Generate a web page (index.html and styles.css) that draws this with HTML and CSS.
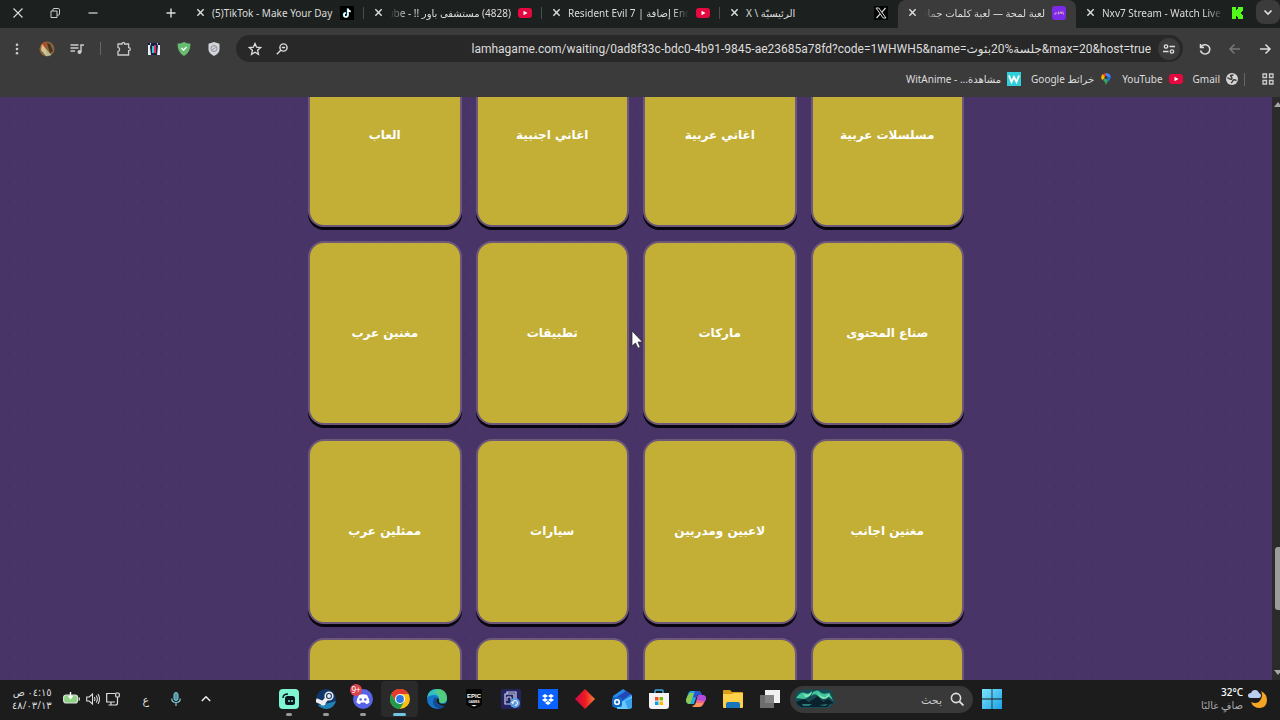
FILE: index.html
```html
<!DOCTYPE html>
<html lang="ar" dir="rtl">

<head>
  <meta charset="UTF-8" />
  <meta name="viewport" content="width=device-width, initial-scale=1.0" />
  <title>لعبة لمحة</title>
  <link rel="stylesheet" href="styles.css">
</head>

<body>
  <svg class="sprites" aria-hidden="true">
    <symbol id="close" viewBox="0 0 10 10"><path d="M1.500 1.500l7 7m0-7l-7 7" fill="none" stroke="currentColor" stroke-width="1.600" /></symbol>
    <symbol id="youtube" viewBox="0 0 14 14"><rect y="2" width="14" height="10" rx="3" fill="#e5093f" /><path d="M5.500 4.800l4 2.200-4 2.200z" fill="#fff" /></symbol>
  </svg>

  <header>
    <div class="tab-strip">
      <button class="tab-search" aria-label="Search tabs"><svg class="icon-sm" viewBox="0 0 10 10"><path d="M1.500 3.500L5 7l3.500-3.500" fill="none" stroke="#ddd" stroke-width="1.700" /></svg></button>

      <div class="tab">
        <svg class="favicon" viewBox="0 0 14 14"><path d="M2 1h4v3h1V3h1V1h5v4h-1v1h-1v2h1v1h1v4H8v-2H7v-1H6v3H2z" fill="#53fc18" /></svg>
        <span class="tab-title fade-right" dir="ltr">Nxv7 Stream - Watch Live o</span>
        <button class="tab-close" aria-label="Close tab"><svg class="icon-sm"><use href="#close" /></svg></button>
      </div>
      <div class="tab active">
        <svg class="favicon" viewBox="0 0 14 14"><rect width="14" height="14" rx="3" fill="#7b2be8" /><path d="M2 8h2V6m1.500 2h1V5.500M8 8V6h1.500v2M11 5.500V8h1" fill="none" stroke="#d6a0b8" stroke-width="1" /></svg>
        <span class="tab-title fade-left">لعبة لمحة — لعبة كلمات جماعية</span>
        <button class="tab-close" aria-label="Close tab"><svg class="icon-sm"><use href="#close" /></svg></button>
      </div>
      <div class="tab">
        <svg class="favicon" viewBox="0 0 14 14"><rect width="14" height="14" fill="#050505" /><path d="M2 2h2.800L12 12H9.200z" fill="none" stroke="#ddd" /><path d="M11.500 2L7.700 6.300M6.200 7.900L2.500 12" stroke="#ddd" stroke-width="1.200" /></svg>
        <span class="tab-title title-end">الرئيسيّة \ X</span>
        <button class="tab-close" aria-label="Close tab"><svg class="icon-sm"><use href="#close" /></svg></button>
      </div>
      <div class="tab divided">
        <svg class="favicon"><use href="#youtube" /></svg>
        <span class="tab-title fade-right" dir="ltr">Resident Evil 7 | إضافة End</span>
        <button class="tab-close" aria-label="Close tab"><svg class="icon-sm"><use href="#close" /></svg></button>
      </div>
      <div class="tab divided">
        <svg class="favicon"><use href="#youtube" /></svg>
        <span class="tab-title fade-left">(4828) مستشفى باور !! - YouTube</span>
        <button class="tab-close" aria-label="Close tab"><svg class="icon-sm"><use href="#close" /></svg></button>
      </div>
      <div class="tab divided">
        <svg class="favicon" viewBox="0 0 14 14"><rect width="14" height="14" fill="#000" /><path d="M7.500 2.500v6.200a2 2 0 1 1-2-2" fill="none" stroke="#2ce" stroke-width="1.500" /><path d="M8 2.500v6.500a2 2 0 1 1-2-2M8 3q.5 2.300 2.800 2.400" fill="none" stroke="#fff" stroke-width="1.600" /></svg>
        <span class="tab-title" dir="ltr">(5)TikTok - Make Your Day</span>
        <button class="tab-close" aria-label="Close tab"><svg class="icon-sm"><use href="#close" /></svg></button>
      </div>
      <button class="new-tab" aria-label="New tab"><svg class="icon-sm" viewBox="0 0 10 10"><path d="M5 .5v9M.5 5h9" stroke="#ddd" stroke-width="1.400" /></svg></button>

      <div class="window-controls">
        <button aria-label="Minimize"><svg class="icon-sm" viewBox="0 0 10 10"><path d="M.5 5h9" stroke="#ddd" stroke-width="1.200" /></svg></button>
        <button aria-label="Restore"><svg class="icon-sm" viewBox="0 0 10 10"><path d="M1 3h6v6.500H1zM3 3V1.200q0-.7.7-.7h4.600q1.200 0 1.200 1.200v4.600q0 .7-.7.7H7" fill="none" stroke="#ccc" /></svg></button>
        <button aria-label="Close"><svg class="icon-sm" viewBox="0 0 10 10"><path d="M.5.5l9 9m0-9l-9 9" stroke="#ddd" stroke-width="1.100" /></svg></button>
      </div>
    </div>

    <div class="toolbar">
      <button aria-label="Forward"><svg class="icon" viewBox="0 0 14 14"><path d="M2 7h10M7.500 2.500L12 7l-4.500 4.500" fill="none" stroke="#ddd" stroke-width="1.500" /></svg></button>
      <button aria-label="Back"><svg class="icon" viewBox="0 0 14 14"><path d="M12 7H2M6.500 2.500L2 7l4.500 4.500" fill="none" stroke="#777" stroke-width="1.500" /></svg></button>
      <button aria-label="Reload"><svg class="icon" viewBox="0 0 14 14"><path d="M2.500 2v3.500H6M3 5a4.700 4.700 0 1 1-.5 3.500" fill="none" stroke="#ddd" stroke-width="1.500" /></svg></button>
      <div class="omnibox">
        <button class="site-info" aria-label="Site information"><svg class="icon-md" viewBox="0 0 12 12"><path d="M6.500 3.500H12M0 8.500h5.500" stroke="#ddd" stroke-width="1.300" /><circle cx="3" cy="3.500" r="1.700" fill="none" stroke="#ddd" stroke-width="1.300" /><circle cx="9" cy="8.500" r="1.700" fill="none" stroke="#ddd" stroke-width="1.300" /></svg></button>
        <input class="url" type="text" dir="ltr" aria-label="Address bar" value="lamhagame.com/waiting/0ad8f33c-bdc0-4b91-9845-ae23685a78fd?code=1WHWH5&amp;name=جلسة%20بثوث&amp;max=20&amp;host=true">
        <button aria-label="Zoom"><svg class="icon-md" viewBox="0 0 12 12"><circle cx="7.500" cy="4.500" r="3.600" fill="none" stroke="#ddd" stroke-width="1.400" /><path d="M5 7L.8 11.200M5.800 4.500h3.400" stroke="#ddd" stroke-width="1.400" /></svg></button>
        <button aria-label="Bookmark this page"><svg class="icon" viewBox="0 0 14 14"><path d="M7 1.500l1.600 3.700 4 .4-3 2.700.9 4L7 10.200l-3.500 2.100.9-4-3-2.700 4-.4z" fill="none" stroke="#ddd" stroke-width="1.300" /></svg></button>
      </div>
      <div class="extensions">
        <button aria-label="Privacy shield"><svg class="icon" viewBox="0 0 14 14"><path d="M7 0l5.500 1.800v5.400q0 4-5.500 6.800-5.500-2.800-5.500-6.800V1.800z" fill="#d3d5da" /><circle cx="7" cy="6.500" r="3" fill="none" stroke="#8b8f98" /><path d="M5.500 7.500l3-2" stroke="#8b8f98" /></svg></button>
        <button aria-label="Ad blocker"><svg class="icon" viewBox="0 0 14 14"><path d="M7 0q3 1.700 6.500 1.700 0 8.800-6.500 12.300Q.5 10.500.5 1.700 4 1.700 7 0z" fill="#68bc71" /><path d="M4.500 6l2 2.200 3-3.200" fill="none" stroke="#fff" stroke-width="1.300" /></svg></button>
        <button aria-label="Video extension"><svg class="icon" viewBox="0 0 14 14"><path d="M1 1h12v12H1z" fill="#e8ecf2" /><path d="M4 1h6l1 3-1 9H4L3 5z" fill="#152442" /><path d="M5 4h2v7H5z" fill="#35cbd2" /><path d="M7 3h2v8H7z" fill="#e52b57" /><path d="M1 1h2v2H1zM11 1h2v2h-2z" fill="#171a3b" /></svg></button>
        <button aria-label="Extensions"><svg class="icon" viewBox="0 0 14 14"><path d="M1 2h4q0-1.500 1.300-1.500T7.600 2h4v3.700q1.700 0 1.700 1.500t-1.700 1.500v4.300H1V9.300q1.600-.2 1.600-1.900T1 5.400z" fill="none" stroke="#ccc" stroke-width="1.300" /></svg></button>
        <span class="divider"></span>
        <button aria-label="Media controls"><svg class="icon" viewBox="0 0 14 14"><path d="M.5 3h8M.5 6h8M.5 9H5M11 10V3h3" fill="none" stroke="#ccc" stroke-width="1.400" /><circle cx="9.500" cy="10" r="2" fill="#ccc" /></svg></button>
        <button aria-label="Profile"><svg class="icon-lg" viewBox="0 0 16 16"><circle cx="8" cy="8" r="7.500" fill="#87633f" /><path d="M2 4q4-4 6-3L7 7 2 10z" fill="#b34c2b" /><path d="M3 3l9 11-5 1L2 9z" fill="#d8c28b" /><path d="M8 2l3 1 3 7-3 2z" fill="#46351d" /><path d="M7 9l5 5-4 1z" fill="#a5bd9c" /></svg></button>
        <button aria-label="Menu"><svg class="icon" viewBox="0 0 14 14"><circle cx="7" cy="2.800" r="1.300" fill="#ccc" /><circle cx="7" cy="7" r="1.300" fill="#ccc" /><circle cx="7" cy="11.200" r="1.300" fill="#ccc" /></svg></button>
      </div>
    </div>

    <nav class="bookmarks">
      <button aria-label="Apps"><svg class="icon-md" viewBox="0 0 12 12"><path d="M1 1h3.500v3.500H1zM7.500 1H11v3.500H7.500zM1 7.500h3.500V11H1zM7.500 7.500H11V11H7.500z" fill="none" stroke="#ccc" stroke-width="1.300" /></svg></button>
      <span class="divider"></span>
      <a href="#"><svg class="icon-md" viewBox="0 0 12 12"><circle cx="6" cy="6" r="6" fill="#d5d5d5" /><path d="M1.500 4.500q3 2.500 4 1.500T5 3.500 7.500 2M10.500 7.500q-3-1.500-3.500 0T5 10" fill="none" stroke="#3b3b3b" stroke-width="1.500" /></svg>Gmail</a>
      <a href="#"><svg class="favicon"><use href="#youtube" /></svg>YouTube</a>
      <a href="#"><svg class="icon-md" viewBox="0 0 12 12"><path d="M6 12Q5.500 9 3 7L6 4.500 9 7Q6.500 9 6 12z" fill="#34a853" /><path d="M2 7Q0 3 3 1l3 3.500z" fill="#fbbc04" /><path d="M2.500 1.500Q4 0 6.500 0L6 4.500z" fill="#ea4335" /><path d="M6 0q4 0 4.800 4L6 4.500z" fill="#4285f4" /><path d="M10.800 4Q11 6 8 9L6 4.500z" fill="#1a73e8" /><circle cx="6" cy="4.400" r="1.600" fill="#3b3b3b" /></svg>خرائط Google</a>
      <a href="#"><svg class="favicon" viewBox="0 0 14 14"><rect width="14" height="14" fill="#2fd0dc" /><path d="M2 3.500L4.500 10 7 5l2.500 5L12 3.500" fill="none" stroke="#fff" stroke-width="1.900" /></svg>مشاهدة... - WitAnime</a>
    </nav>
  </header>

  <div class="viewport">
    <div class="scrollbar">
      <svg class="arrow" viewBox="0 0 6 6"><path d="M0 6l4-5 2 2.500V6z" fill="#a5a5a5" /></svg>
      <span class="thumb"></span>
      <svg class="arrow" viewBox="0 0 6 6"><path d="M0 0l4 5 2-2.500V0z" fill="#a5a5a5" /></svg>
    </div>
    <main>
      <div class="categories">
        <button class="category">مسلسلات عربية</button>
        <button class="category">اغاني عربية</button>
        <button class="category">اغاني اجنبية</button>
        <button class="category">العاب</button>
        <button class="category">صناع المحتوى</button>
        <button class="category">ماركات</button>
        <button class="category">تطبيقات</button>
        <button class="category">مغنين عرب</button>
        <button class="category">مغنين اجانب</button>
        <button class="category">لاعبين ومدربين</button>
        <button class="category">سيارات</button>
        <button class="category">ممثلين عرب</button>
        <button class="category" aria-label="13"></button>
        <button class="category" aria-label="14"></button>
        <button class="category" aria-label="15"></button>
        <button class="category" aria-label="16"></button>
      </div>
    </main>
  </div>

  <footer>
    <div class="weather">
      <svg class="icon-xl" viewBox="0 0 20 20"><path d="M13 2q6 3 6 9 0 7-7 8-7 0-9-6 7 3 10-3 2-4 0-8z" fill="#f5a524" /><path d="M3 9Q0 9 0 6.500T3 4q1-3 4-3t4 3q2 .5 2 2.500T11 9z" fill="#b9cdf5" /></svg>
      <div class="weather-text">
        <strong dir="ltr">32°C</strong>
        <span>صافٍ غالبًا</span>
      </div>
    </div>

    <div class="apps">
      <button aria-label="Start"><svg class="icon-xl" viewBox="0 0 20 20"><defs><linearGradient id="win" x2="1" y2="1"><stop stop-color="#7be4fb" /><stop offset="1" stop-color="#1c9fe8" /></linearGradient></defs><path d="M0 0h9.600v9.600H0zM10.400 0H20v9.600h-9.600zM0 10.400h9.600V20H0zM10.400 10.400H20V20h-9.600z" fill="url(#win)" /></svg></button>
      <label class="search">
        <svg class="icon" viewBox="0 0 14 14"><circle cx="6" cy="6" r="4.600" fill="none" stroke="#ddd" stroke-width="1.600" /><path d="M9.500 9.500L13.500 13.500" stroke="#ddd" stroke-width="1.800" /></svg>
        <input type="text" placeholder="بحث" aria-label="بحث">
        <svg class="aurora" viewBox="0 0 42 20"><path d="M2 3q8-4 19-2 10-2 17 1l2 9 2 3-4 2-3 3H7q-5-2-6-9z" fill="#164c55" /><path d="M2 9q5-7 9-5t7-1q-3 6-8 7zM19 3q5-3 7 0t9 1q3 4 4 8-4-6-9-4t-7-2q-3-2-6 1z" fill="#3fc49c" /><path d="M9 4q4 4 9-2-1 7-7 6zM24 3q2 5 7 5l5-4q-1 6-7 6-4-1-5-7z" fill="#7ce6b2" /><path d="M2 13l8-3 5 3 9-6 5 6 5-3 6 4-4 1-3 3H7q-3-1-5-5z" fill="#0b222c" /><path d="M8 15h10l-3 2H9zM25 16l9-1-3 2z" fill="#267f7e" /></svg>
      </label>
      <button aria-label="Task view"><svg class="icon-xl" viewBox="0 0 20 20"><path d="M5 1h15v13H5z" fill="#f0f0f0" /><path d="M0 6h14v13H0z" fill="#777" opacity=".9" /></svg></button>
      <button aria-label="File Explorer"><svg class="icon-xl" viewBox="0 0 20 20"><path d="M0 2q0-1 1-1h6l2 2h10q1 0 1 1v5H0z" fill="#d99b18" /><path d="M0 5h9l2-1h9v14q0 1-1 1H1q-1 0-1-1z" fill="#ffd04a" /><path d="M3 19v-4q0-2 2-2h10q2 0 2 2v4z" fill="#1976ba" /></svg></button>
      <button aria-label="Copilot"><svg class="icon-xl" viewBox="0 0 20 20"><path d="M5 2h7q3 0 3 3l-4 1-3 9H4q-4 0-4-4l2-6q1-3 3-3z" fill="#25a8e0" /><path d="M1 8l3-4h4L5 13l-1 2q-4 0-4-4z" fill="#8bcb4e" /><path d="M9 2h3q3 0 4 4h-5l-1 3-3-1z" fill="#2856d0" /><path d="M6 17q3 0 4-4l2-7h4q4 0 4 4l-3 6q-1 2-4 2H9q-2 0-3-1z" fill="#f0648c" /><path d="M12 6h4q4 0 4 4l-1 2-8-1z" fill="#b34ae0" /><path d="M6 17q3 0 4-3h7l-1 2q-1 2-4 2H9q-2 0-3-1z" fill="#f79a56" /></svg></button>
      <button aria-label="Store"><svg class="icon-xl" viewBox="0 0 20 20"><path d="M6 5V2q0-1 1-1h6q1 0 1 1v3" fill="none" stroke="#3aa8dc" stroke-width="1.500" /><path d="M0 4h20v13q0 3-3 3H3q-3 0-3-3z" fill="#f4f4f4" /><path d="M6 8h3.500v3.500H6z" fill="#f25022" /><path d="M10.500 8H14v3.500h-3.500z" fill="#7fba00" /><path d="M6 12.500h3.500V16H6z" fill="#00a4ef" /><path d="M10.500 12.500H14V16h-3.500z" fill="#ffb900" /></svg></button>
      <button aria-label="Outlook"><svg class="icon-xl" viewBox="0 0 20 20"><path d="M1 7L11 0l9 6v10q0 3-3 3H5q-4 0-4-4z" fill="#258bea" /><path d="M3 9l11-7 5 3-12 9z" fill="#2447b8" /><path d="M6 15L20 7v10q0 3-3 3H5z" fill="#66cafa" /><path d="M13 12l7-3v8q-1 3-4 3z" fill="#399fee" /><rect y="8" width="10" height="10" rx="2" fill="#1268c4" /><circle cx="5" cy="13" r="2.300" fill="none" stroke="#fff" stroke-width="1.600" /></svg></button>
      <button aria-label="Anydesk"><svg class="icon-xl" viewBox="0 0 20 20"><defs><linearGradient id="red"><stop stop-color="#c60b4e" /><stop offset=".5" stop-color="#f01822" /><stop offset="1" stop-color="#ef8535" /></linearGradient></defs><path d="M10 0l10 10-10 10L0 10z" fill="url(#red)" /></svg></button>
      <button aria-label="Dropbox"><svg class="icon-xl" viewBox="0 0 20 20"><path d="M0 0h20v20H0z" fill="#0b61fe" /><path d="M7 5l3 2-3 2-3-2zM13 5l3 2-3 2-3-2zM7 9l3 2-3 2-3-2zM13 9l3 2-3 2-3-2zM10 12l3 2-3 2-3-2z" fill="#fff" /></svg></button>
      <button aria-label="Backup"><svg class="icon-xl" viewBox="0 0 20 20"><rect width="20" height="20" rx="2" fill="#25235f" /><path d="M4 5h9v10H4zM6 5V3h9v8" fill="none" stroke="#ccd4f0" stroke-width="1.200" /><path d="M6 12V8h4v3" fill="none" stroke="#ccd4f0" /><circle cx="14" cy="14" r="5" fill="#5c9be0" /><path d="M11.500 14a2.500 2.500 0 1 1 2.500 2.500M10.500 13l1 1.500 1.500-1" fill="none" stroke="#fff" /></svg></button>
      <button aria-label="Epic Games"><svg class="icon-xl" viewBox="0 0 20 20"><path d="M3 0h14q1 0 1 1v15l-8 4-8-4V1q0-1 1-1z" fill="#060606" /><text x="10" y="9" class="epic-name">EPIC</text><text x="10" y="14" class="epic-sub">GAMES</text><path d="M7 16h6l-3 1.500z" fill="#eee" /></svg></button>
      <button aria-label="Edge"><svg class="icon-xl" viewBox="0 0 20 20"><circle cx="10" cy="10" r="10" fill="#1576c8" /><path d="M0 9Q1 0 10 0t10 9q0 5-5 5-4 0-3-3Q12 6 7 6 2 6 0 9z" fill="#31bfc5" /><path d="M10 0q10 0 10 9 0 5-5 5-4 0-3-3 1-6-5-8z" fill="#5bd16b" opacity=".75" /><path d="M7 9q-3 8 5 11 5-1 7-5-8 3-10-2-1-2 1-4z" fill="#124a96" /><path d="M11 9q2 2 1 4 1 2 4 2l4-1v2l-2 1q-5 0-8-3-2-3 1-5z" fill="#1c1c1c" /></svg></button>
      <button class="open current" aria-label="Chrome"><svg class="icon-xl" viewBox="0 0 20 20"><circle cx="10" cy="10" r="10" fill="#fbc116" /><path d="M1.300 5A10 10 0 0 1 18.700 5H10q-4 0-4.400 7.500z" fill="#e33b2e" /><path d="M1.300 5A10 10 0 0 0 10 20l4.300-7.500H5.700z" fill="#229a4b" /><circle cx="10" cy="10" r="5" fill="#fff" /><circle cx="10" cy="10" r="3.900" fill="#2b78e4" /></svg></button>
      <button class="open" aria-label="Discord"><svg class="icon-xl" viewBox="0 0 20 20"><circle cx="10" cy="10" r="10" fill="#5763e8" /><path d="M6 6q4-1.500 8 0 2.500 4 2.500 7.500-2 1.500-3.500 1.500l-1-1.500H8L7 15q-1.500 0-3.500-1.500Q3.500 10 6 6z" fill="#fff" /><circle cx="7.700" cy="10.500" r="1.300" fill="#5763e8" /><circle cx="12.300" cy="10.500" r="1.300" fill="#5763e8" /></svg><span class="badge" dir="ltr">9+</span></button>
      <button class="open" aria-label="Steam"><svg class="icon-xl" viewBox="0 0 20 20"><circle cx="10" cy="10" r="10" fill="#12366a" /><path d="M2 16q3 4 9 4 7-1 9-8l-7 2z" fill="#2182b5" /><path d="M0 11l7 3 5-6" fill="none" stroke="#eee" stroke-width="4" /><circle cx="13" cy="7" r="3.800" fill="#12366a" stroke="#eee" stroke-width="1.600" /><circle cx="13" cy="7" r="1.900" fill="#eee" /><circle cx="7" cy="14" r="2.500" fill="#eee" /></svg></button>
      <button class="open" aria-label="Streamlabs"><svg class="icon-xl" viewBox="0 0 20 20"><rect width="20" height="20" rx="4" fill="#80f5d2" /><path d="M4 9q0-4 5-4" fill="none" stroke="#09161d" stroke-width="1.500" /><rect x="6" y="7" width="10" height="9" rx="2.500" fill="#09161d" /><path d="M10 11v2M13 11v2" stroke="#80f5d2" stroke-width="1.400" /></svg></button>
    </div>

    <div class="tray">
      <button aria-label="Hidden icons"><svg class="icon-sm" viewBox="0 0 10 10"><path d="M.8 7L5 2.800 9.200 7" fill="none" stroke="#eee" stroke-width="1.500" /></svg></button>
      <button aria-label="Microphone"><svg class="icon" viewBox="0 0 14 14"><rect x="5" y="0.500" width="4" height="8" rx="2" fill="#4f94a5" stroke="#80cbdc" /><path d="M2.800 6.500q0 4 4.200 4t4.200-4M7 10.500V14" fill="none" stroke="#80cbdc" stroke-width="1.200" /></svg></button>
      <button class="language">ع</button>
      <div class="status">
        <svg class="icon" viewBox="0 0 14 14"><path d="M9 1.500H.7V10H9M5 10v2.500M2.500 13h8M11.500 5v6q0 2-2 2" fill="none" stroke="#ddd" stroke-width="1.200" /><rect x="9.700" y="1" width="3.600" height="4" rx="1" fill="none" stroke="#ddd" stroke-width="1.200" /></svg>
        <svg class="icon" viewBox="0 0 14 14"><path d="M.7 5h2.500L6.500 2v10L3.200 9H.7z" fill="none" stroke="#ddd" stroke-width="1.100" /><path d="M8.300 5q1.300 2 0 4M10.200 3.500q2.300 3.500 0 7M12 2q3 5 0 10" fill="none" stroke="#ddd" stroke-width="1.100" /></svg>
        <svg class="battery" viewBox="0 0 17 14"><rect x=".6" y="3" width="14" height="8" rx="2.500" fill="#8fd484" stroke="#ddd" stroke-width="1.200" /><path d="M16.300 5.500v3" stroke="#ddd" stroke-width="1.300" /><path d="M7.500 0v5.500M5.500 4l2 2.500 2-2.500" fill="none" stroke="#fff" stroke-width="1.400" /></svg>
      </div>
      <div class="clock">
        <span>٠٤:١٥ ص</span>
        <span dir="ltr">٤٨/٠٣/١٣</span>
      </div>
    </div>
  </footer>

  <svg class="cursor" viewBox="0 0 12 19"><path d="M1 1v15l3.500-3 2.500 5.200 2.200-1L7 12h4.500z" fill="#fff" stroke="#222" stroke-width=".7" /></svg>
</body>

</html>
```
FILE: styles.css
```css
* {
  box-sizing: border-box;
}

body {
  margin: 0;
  height: 100vh;
  display: flex;
  flex-direction: column;
  overflow: hidden;
  background-color: #483466;
  color: #ddd;
  font-family: "Noto Sans", "Open Sans", "DejaVu Sans", sans-serif;
  font-size: 11px;
}

button {
  border: none;
  padding: 0;
  background-color: transparent;
  color: inherit;
  font: inherit;
  cursor: pointer;
  display: flex;
  align-items: center;
  justify-content: center;
  flex-shrink: 0;
}

input {
  border: none;
  outline: none;
  padding: 0;
  min-width: 0;
  background-color: transparent;
  color: inherit;
  font: inherit;
}

svg {
  display: block;
  flex-shrink: 0;
}

.sprites {
  display: none;
}

.icon-sm {
  width: 10px;
  height: 10px;
}

.icon-md {
  width: 12px;
  height: 12px;
}

.icon,
.favicon {
  width: 14px;
  height: 14px;
}

.icon-lg {
  width: 16px;
  height: 16px;
}

.icon-xl {
  width: 20px;
  height: 20px;
}

.divider {
  width: 1px;
  height: 13px;
  background-color: #666;
}

/* tabs */
.tab-strip {
  display: flex;
  height: 28px;
  background-color: #1c201f;
}

.tab-search {
  width: 24px;
  height: 24px;
  margin-left: 2px;
  border-radius: 8px;
  background-color: #3b3b3b;
}

.tab {
  flex: 0 1 178px;
  min-width: 0;
  display: flex;
  align-items: center;
  gap: 7px;
  padding: 0 10px 3px;
}

.tab.active {
  background-color: #3b3b3b;
  border-radius: 8px 8px 0 0;
}

.tab.divided {
  background: linear-gradient(#4a4d4c, #4a4d4c) right 7px / 1px 12px no-repeat;
}

.tab-close svg {
  width: 9px;
  height: 9px;
}

.tab-title {
  flex: 1;
  min-width: 0;
  overflow: hidden;
  white-space: nowrap;
  line-height: 20px;
  font-size: 10px;
}

.title-end {
  text-align: left;
}

.fade-left {
  mask-image: linear-gradient(to right, transparent, #000 16px);
}

.fade-right {
  mask-image: linear-gradient(to left, transparent, #000 16px);
}

.new-tab {
  width: 30px;
  height: 25px;
}

.window-controls {
  display: flex;
  height: 25px;
  margin-right: auto;
}

.window-controls button {
  width: 38px;
}

.window-controls button:last-child {
  width: 36px;
}

/* address row */
.toolbar {
  display: flex;
  align-items: center;
  height: 41px;
  background-color: #3b3b3b;
}

.toolbar > button {
  width: 30px;
  height: 28px;
}

.omnibox {
  flex: 1;
  min-width: 0;
  height: 27px;
  display: flex;
  align-items: center;
  gap: 14px;
  margin-right: 7px;
  padding: 0 3px 0 12px;
  border-radius: 14px;
  background-color: #282828;
}

.site-info {
  width: 22px;
  height: 22px;
  border-radius: 50%;
  background-color: #3b3b3b;
}

.url {
  flex: 1;
  margin-right: -7px;
  text-align: right;
  font-family: Roboto, "Noto Sans", "DejaVu Sans", sans-serif;
  font-size: 12px;
}

.extensions {
  display: flex;
  align-items: center;
  gap: 6px;
  padding: 0 10px 0 5px;
}

.extensions button {
  width: 24px;
  height: 24px;
}

.extensions .divider {
  margin: 0 5px;
}

/* bookmarks */
.bookmarks {
  display: flex;
  align-items: center;
  gap: 10px;
  height: 28px;
  padding: 0 6px 8px;
  background-color: #3b3b3b;
  font-size: 10px;
}

.bookmarks .divider {
  margin: 0 7px 0 -4px;
}

.bookmarks a {
  display: flex;
  align-items: center;
  gap: 6px;
  color: inherit;
  text-decoration: none;
  white-space: nowrap;
}

/* game page */
.viewport {
  flex: 1;
  min-height: 0;
  display: flex;
}

.scrollbar {
  width: 8px;
  display: flex;
  flex-direction: column;
  align-items: flex-start;
  padding: 4px 0;
  background-color: #2b2b2b;
}

.arrow {
  width: 6px;
  height: 6px;
}

.thumb {
  width: 5px;
  height: 63px;
  margin: auto 0 60px;
  border-radius: 3px 0 0 3px;
  background-color: #9b9b9b;
}

main {
  flex: 1;
  min-width: 0;
  overflow: hidden;
  background: radial-gradient(rgba(30, 15, 45, 0.06) 1px, transparent 2px) 0 0 / 19px 19px;
}

.categories {
  display: grid;
  grid-template-columns: repeat(4, 1fr);
  gap: 14px;
  max-width: 656px;
  /* list is scrolled part way into its first row */
  margin: -54px auto 0;
}

.category {
  aspect-ratio: 5 / 6;
  border: 2px solid #6d587a;
  border-radius: 16px;
  background-color: #c3af35;
  box-shadow: 0 3px 0 #080510;
  color: #fff;
  font-family: "DejaVu Sans", sans-serif;
  font-size: 12px;
  font-weight: bold;
}

/* taskbar */
footer {
  height: 40px;
  display: grid;
  grid-template-columns: 1fr auto 1fr;
  align-items: center;
  padding: 0 12px 2px;
  background-color: #1c1c1c;
}

.weather {
  display: flex;
  align-items: center;
  gap: 5px;
}

.weather-text,
.clock {
  display: flex;
  flex-direction: column;
  font-size: 10px;
  line-height: 13px;
  white-space: nowrap;
}

.weather-text strong {
  text-align: right;
  color: #fff;
  font-weight: 500;
}

.weather-text span {
  color: #aaa;
}

.apps {
  display: flex;
  align-items: center;
}

.apps button {
  position: relative;
  width: 37px;
  height: 36px;
}

.open::after {
  content: "";
  position: absolute;
  bottom: 1px;
  width: 6px;
  height: 3px;
  border-radius: 2px;
  background-color: #999;
}

.current {
  border-radius: 4px;
  background-color: #2a2a2a;
}

.apps .current::after {
  width: 13px;
  background-color: #6fc6e4;
}

.badge {
  position: absolute;
  top: 3px;
  left: 6px;
  width: 12px;
  height: 12px;
  border-radius: 50%;
  background-color: #d9444c;
  color: #fff;
  font-size: 8px;
  line-height: 12px;
}

.search {
  width: 183px;
  height: 27px;
  display: flex;
  align-items: center;
  gap: 8px;
  margin-left: 2px;
  padding: 0 9px 0 4px;
  border-radius: 14px;
  background-color: #393939;
}

.search input {
  flex: 1;
}

.search input::placeholder {
  color: #ccc;
}

.aurora {
  width: 42px;
  height: 20px;
}

.epic-name,
.epic-sub {
  fill: #fff;
  font-family: "Liberation Sans", sans-serif;
  font-weight: bold;
  text-anchor: middle;
  direction: ltr;
}

.epic-name {
  font-size: 6px;
}

.epic-sub {
  font-size: 3px;
}

.tray {
  display: flex;
  align-items: center;
  justify-content: flex-end;
}

.tray button {
  width: 30px;
  height: 28px;
}

.status {
  display: flex;
  align-items: center;
  gap: 6px;
  margin: 0 11px;
}

.battery {
  width: 17px;
  height: 14px;
}

.cursor {
  position: absolute;
  left: 631px;
  top: 330px;
  width: 12px;
  height: 19px;
}
```
